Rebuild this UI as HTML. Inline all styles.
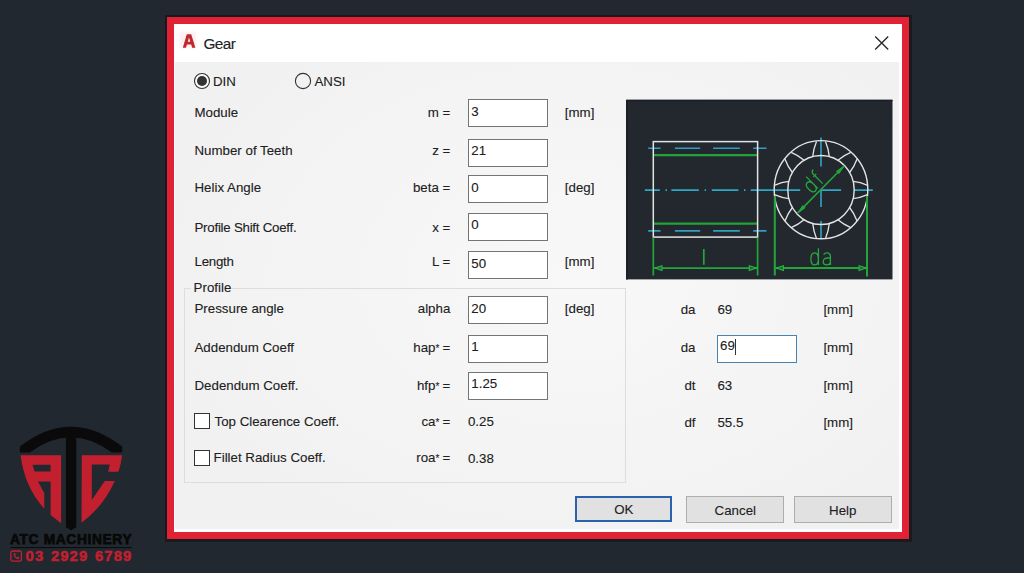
<!DOCTYPE html>
<html><head><meta charset="utf-8">
<style>
*{margin:0;padding:0;box-sizing:border-box}
html,body{width:1024px;height:573px;overflow:hidden;background:#22282f;position:relative;font-family:"Liberation Sans",sans-serif}
.a{position:absolute}
.t{position:absolute;font-size:13.3px;line-height:15px;white-space:nowrap;color:#202020;-webkit-text-stroke:0.1px #202020}
.r{text-align:right}
.box{position:absolute;background:#fff;border:1px solid #747474;left:468px;width:80px;height:28px}
.btn{position:absolute;background:#e1e1e1;border:1px solid #adadad}
</style></head><body>
<!-- logo -->
<svg class="a" style="left:0;top:0" width="160" height="573" viewBox="0 0 160 573">
<path d="M19.9 446.6Q70.8 407 122.2 446.6V452.6H111.8Q70.8 422 29.8 452.6H19.9Z" fill="#0a0a0a"/>
<path d="M65.9 436H76.3V527.2L71.1 530.3L65.9 527.2Z" fill="#0a0a0a"/>
<path fill-rule="evenodd" d="M20.6 455.3H61.1V523.3L50.6 514.9V481.4H38L44.3 493.3V508.7Q24.5 487 20.6 455.3ZM32.5 464.7H50.6V471.6H34.6Z" fill="#c3202f"/>
<path d="M81.8 455.2H122Q121 465 118.2 471.7H108.2L109.8 464.6H91.8V500L104.8 480.9H114.8Q103 507 81.5 522.7Z" fill="#c3202f"/>
<text x="10" y="543.5" font-family="Liberation Sans" font-weight="bold" font-size="13.8" letter-spacing="0.62" fill="#080808" stroke="#080808" stroke-width="0.75">ATC MACHINERY</text>
<rect x="10.3" y="547" width="121.5" height="1.1" fill="#0c0c0c"/>
<rect x="10.9" y="551" width="10.5" height="10.2" rx="1.8" fill="none" stroke="#c3202f" stroke-width="1.3"/>
<path d="M13.6 553.4Q13.6 558.6 18.8 559.2L19.4 557.4L17.6 556.6L16.8 557.4Q15.3 556.8 15 555.2L15.9 554.5L15.2 552.9Z" fill="#c3202f"/>
<text x="25.6" y="561.3" font-family="Liberation Sans" font-weight="bold" font-size="14.8" letter-spacing="1.1" word-spacing="1.5" fill="#c3202f" stroke="#c3202f" stroke-width="0.5">03 2929 6789</text>
</svg>
<!-- dialog shadow/outline -->
<div class="a" style="left:164.5px;top:15px;width:747.8px;height:526.5px;background:#171b1e"></div>
<!-- red frame -->
<div class="a" style="left:167px;top:17px;width:742.1px;height:522.1px;background:#e02234"></div>
<!-- inner body -->
<div class="a" style="left:174px;top:24px;width:728.1px;height:507.8px;background:radial-gradient(ellipse 60% 60% at 55% 50%,#f8f8f8,#f1f1f1);border:1px solid #fdfdfd;border-width:0 3px 3px 1px"></div>
<!-- title bar -->
<div class="a" style="left:174px;top:24px;width:728.1px;height:38.4px;background:#ffffff"></div>

<!-- title icon -->
<div class="a" style="left:179.5px;top:32px;width:16px;height:16px;background:#fcefef;filter:blur(0.8px)"></div>
<svg class="a" style="left:176px;top:28px;filter:blur(0.3px)" width="24" height="24" viewBox="176 28 24 24">
<path fill-rule="evenodd" d="M182.8 47.7L186.8 34.3H191.2L195.4 47.7H192.1L191.2 44.6H186.9L186 47.7ZM187.8 41.8H190.3L189 37.6Z" fill="#c1272f"/>
</svg>
<div class="t" style="left:203.4px;top:35.6px;font-size:15.4px;line-height:16px;letter-spacing:-0.6px;color:#222">Gear</div>
<!-- close X -->
<svg class="a" style="left:870px;top:32px" width="24" height="22" viewBox="0 0 24 22">
<path d="M5.2 4.6 L18.2 17.4 M18.2 4.6 L5.2 17.4" stroke="#2a2a2a" stroke-width="1.4" fill="none"/>
</svg>

<!-- radios -->
<svg class="a" style="left:192px;top:71px" width="20" height="20" viewBox="0 0 20 20">
<circle cx="10" cy="10" r="7.5" fill="#fafafa" stroke="#333" stroke-width="1.1"/>
<circle cx="10" cy="10" r="5" fill="#333"/>
</svg>
<div class="t" style="left:213px;top:73.8px">DIN</div>
<svg class="a" style="left:293px;top:71px" width="20" height="20" viewBox="0 0 20 20">
<circle cx="10" cy="10" r="7.6" fill="none" stroke="#333" stroke-width="1.1"/>
</svg>
<div class="t" style="left:314.5px;top:73.8px">ANSI</div>

<!-- labels -->
<div class="t" style="left:194.5px;top:104.7px">Module</div>
<div class="t" style="left:194.5px;top:143.4px">Number of Teeth</div>
<div class="t" style="left:194.5px;top:180.3px">Helix Angle</div>
<div class="t" style="left:194.5px;top:219.6px;letter-spacing:-0.25px">Profile Shift Coeff.</div>
<div class="t" style="left:194.5px;top:254.1px;letter-spacing:-0.25px">Length</div>

<!-- symbols -->
<div class="t r" style="right:573.7px;top:104.7px">m =</div>
<div class="t r" style="right:573.7px;top:143.4px">z =</div>
<div class="t r" style="right:573.7px;top:180.3px">beta =</div>
<div class="t r" style="right:573.7px;top:219.6px">x =</div>
<div class="t r" style="right:573.7px;top:254.1px">L =</div>

<!-- inputs -->
<div class="box" style="top:99.4px"></div><div class="t" style="left:471.3px;top:103.5px">3</div>
<div class="box" style="top:138.8px"></div><div class="t" style="left:471.3px;top:142.9px">21</div>
<div class="box" style="top:175.4px"></div><div class="t" style="left:471.3px;top:179.5px">0</div>
<div class="box" style="top:212.7px"></div><div class="t" style="left:471.3px;top:216.8px">0</div>
<div class="box" style="top:251.4px"></div><div class="t" style="left:471.3px;top:255.5px">50</div>

<!-- units -->
<div class="t" style="left:564.8px;top:104.7px">[mm]</div>
<div class="t" style="left:564.8px;top:180.3px">[deg]</div>
<div class="t" style="left:564.8px;top:254.1px">[mm]</div>

<!-- group box -->
<div class="a" style="left:184px;top:288px;width:441.5px;height:194.5px;border:1px solid #dddddd;border-top:none"></div>
<div class="a" style="left:184px;top:288px;width:7px;height:1px;background:#dddddd"></div>
<div class="a" style="left:232px;top:288px;width:393.5px;height:1px;background:#dddddd"></div>
<div class="t" style="left:193.6px;top:280.4px">Profile</div>

<div class="t" style="left:194.5px;top:301.4px">Pressure angle</div>
<div class="t" style="left:194.5px;top:340.1px">Addendum Coeff</div>
<div class="t" style="left:194.5px;top:377.5px">Dedendum Coeff.</div>
<div class="a" style="left:193.8px;top:413px;width:16.3px;height:16px;background:#fff;border:1px solid #333"></div>
<div class="t" style="left:214.5px;top:413.9px">Top Clearence Coeff.</div>
<div class="a" style="left:193.8px;top:449.8px;width:16.3px;height:16px;background:#fff;border:1px solid #333"></div>
<div class="t" style="left:213.6px;top:450.4px">Fillet Radius Coeff.</div>

<div class="t r" style="right:573.7px;top:301.4px">alpha</div>
<div class="t r" style="right:573.7px;top:340.1px">hap<span style="font-size:10px;letter-spacing:-0.5px">*</span> =</div>
<div class="t r" style="right:573.7px;top:377.5px">hfp<span style="font-size:10px;letter-spacing:-0.5px">*</span> =</div>
<div class="t r" style="right:573.7px;top:413.9px">ca<span style="font-size:10px;letter-spacing:-0.5px">*</span> =</div>
<div class="t r" style="right:573.7px;top:450.4px">roa<span style="font-size:10px;letter-spacing:-0.5px">*</span> =</div>

<div class="box" style="top:296.4px"></div><div class="t" style="left:471.3px;top:300.5px">20</div>
<div class="box" style="top:335.2px"></div><div class="t" style="left:471.3px;top:339.3px">1</div>
<div class="box" style="top:372.2px"></div><div class="t" style="left:471.3px;top:376.3px">1.25</div>
<div class="t" style="left:467.9px;top:414.1px">0.25</div>
<div class="t" style="left:467.9px;top:450.6px">0.38</div>
<div class="t" style="left:564.8px;top:301.4px">[deg]</div>

<!-- image panel -->
<svg class="a" style="left:0;top:0" width="1024" height="573" viewBox="0 0 1024 573">
<rect x="626" y="99.8" width="266.5" height="179.6" fill="#23282f"/><path d="M627 279.4V100.5H892.5" stroke="#1a1e24" stroke-width="1.5" fill="none"/>
<g fill="none" stroke-linecap="butt">
<!-- side view -->
<path d="M653.3 155.1H757.5M653.3 223.7H757.5" stroke="#23a23c" stroke-width="2.2"/>
<path d="M648.2 148.3H660.5M674.9 148.3H700.2M713.1 148.3H739.8M753.2 148.3H766.5M648.2 230.9H660.5M674.9 230.9H700.2M713.1 230.9H739.8M753.2 230.9H766.5" stroke="#2f9fc0" stroke-width="1.6"/>
<path d="M644.8 190.1H659.8M665.5 190.1H667M671.4 190.1H698.8M704.6 190.1H706.1M711.8 190.1H738.4M744 190.1H745.5M750.7 190.1H800.2M820.9 190.1H841.1M853.9 190.1H872.8M821 137.5V166.5M821 190V207M821 221V239" stroke="#2fa6c4" stroke-width="1.6"/>
<rect x="653.3" y="141.6" width="104.3" height="95.5" stroke="#e4e4e4" stroke-width="1.5"/>
<path d="M653.3 237.5V275.6M757.6 237.5V275.6M703.8 249V264.7M654.4 268.1H756.9" stroke="#22a53a" stroke-width="1.7"/>
<path d="M654.8 268.1L662 265.8L662 270.4ZM756.5 268.1L749.3 265.8L749.3 270.4Z" fill="#1f6b30" stroke="#2ab345" stroke-width="1.1"/>
<!-- gear -->
<ellipse cx="821" cy="189.7" rx="46.8" ry="49.1" stroke="#e4e4e4" stroke-width="1.4"/>
<ellipse cx="821" cy="190" rx="33.2" ry="34.5" stroke="#e4e4e4" stroke-width="1.4"/>
<path d="M853.1 181.4Q860.3 182.1 867.6 185.3M853.1 198.6Q860.3 197.9 867.6 194.7M837.9 160.2Q843.4 155.5 850.8 152.4M849.6 172.5Q854.2 166.7 857.1 159.0M812.7 156.6Q813.4 149.2 816.5 141.6M829.3 156.6Q828.6 149.2 825.5 141.6M792.4 172.5Q787.8 166.7 784.9 159.0M804.1 160.2Q798.6 155.5 791.2 152.4M788.9 198.6Q781.7 197.9 774.4 194.7M788.9 181.4Q781.7 182.1 774.4 185.3M804.1 219.8Q798.6 224.5 791.2 227.6M792.4 207.5Q787.8 213.3 784.9 221.0M829.3 223.4Q828.6 230.8 825.5 238.4M812.7 223.4Q813.4 230.8 816.5 238.4M849.6 207.5Q854.2 213.3 857.1 221.0M837.9 219.8Q843.4 224.5 850.8 227.6" stroke="#e4e4e4" stroke-width="1.3"/>
<path d="M774.8 196V275.5M867 196V276.5M775.9 268.1H866.7" stroke="#22a53a" stroke-width="2"/><path d="M797.8 212.9L843.9 166.2" stroke="#22a53a" stroke-width="1.6"/>
<path d="M776.2 268.1L783.4 265.8L783.4 270.4ZM866.3 268.1L859.1 265.8L859.1 270.4Z" fill="#1f6b30" stroke="#2ab345" stroke-width="1.1"/><path d="M844.2 165.9L838.9 173.6L836.6 171.3ZM797.5 213.2L802.8 205.5L805.1 207.8Z" fill="#22a53a" stroke="#22a53a" stroke-width="1"/>
<g stroke="#25a83c" stroke-width="1.3">
<path d="M818.4 248.3V264.9M818.4 259Q818.4 252.9 814.6 252.9Q810.9 252.9 810.9 258.9Q810.9 264.9 814.6 264.9Q818.4 264.9 818.4 259M823.6 254.6Q824.8 252.9 826.9 252.9Q830.4 252.9 830.4 256.5V264.9M830.4 258.2Q826 257.6 824.6 258.8Q823.2 259.8 823.2 261.8Q823.2 264.9 826.6 264.9Q830.4 264.9 830.4 261.5"/>
<g transform="translate(812.6,193.7) rotate(-45)"><path d="M7.5 -16.6V0M7.5 -5.8Q7.5 -11.6 3.9 -11.6Q0.4 -11.6 0.4 -5.8Q0.4 0 3.9 0Q7.5 0 7.5 -5.8M14.3 0V-12.8Q14.3 -16.6 17.6 -16.6M12.4 -11.4H16.6"/></g>
</g>
</g>
</svg>

<!-- results -->
<div class="t r" style="right:328.5px;top:302px">da</div>
<div class="t" style="left:717.4px;top:302px">69</div>
<div class="t" style="left:823.4px;top:302px">[mm]</div>
<div class="t r" style="right:328.5px;top:340.2px">da</div>
<div class="a" style="left:717.4px;top:335px;width:79.3px;height:28.3px;background:#fff;border:1px solid #4784b0"></div>
<div class="t" style="left:720px;top:338.4px">69</div>
<div class="a" style="left:734.6px;top:338.5px;width:1.2px;height:16px;background:#333"></div>
<div class="t" style="left:823.4px;top:340.2px">[mm]</div>
<div class="t r" style="right:328.5px;top:377.9px">dt</div>
<div class="t" style="left:717.4px;top:377.9px">63</div>
<div class="t" style="left:823.4px;top:377.9px">[mm]</div>
<div class="t r" style="right:328.5px;top:414.5px">df</div>
<div class="t" style="left:717.4px;top:414.5px">55.5</div>
<div class="t" style="left:823.4px;top:414.5px">[mm]</div>

<!-- buttons -->
<div class="btn" style="left:575.3px;top:496.3px;width:97px;height:25.4px;border:2px solid #2a63ad"></div>
<div class="t" style="left:575.3px;width:97px;text-align:center;top:501.9px">OK</div>
<div class="btn" style="left:686.4px;top:496px;width:97.8px;height:26.7px"></div>
<div class="t" style="left:686.4px;width:97.8px;text-align:center;top:502.6px">Cancel</div>
<div class="btn" style="left:793.9px;top:496px;width:97.7px;height:26.7px"></div>
<div class="t" style="left:793.9px;width:97.7px;text-align:center;top:502.6px">Help</div>

</body></html>
